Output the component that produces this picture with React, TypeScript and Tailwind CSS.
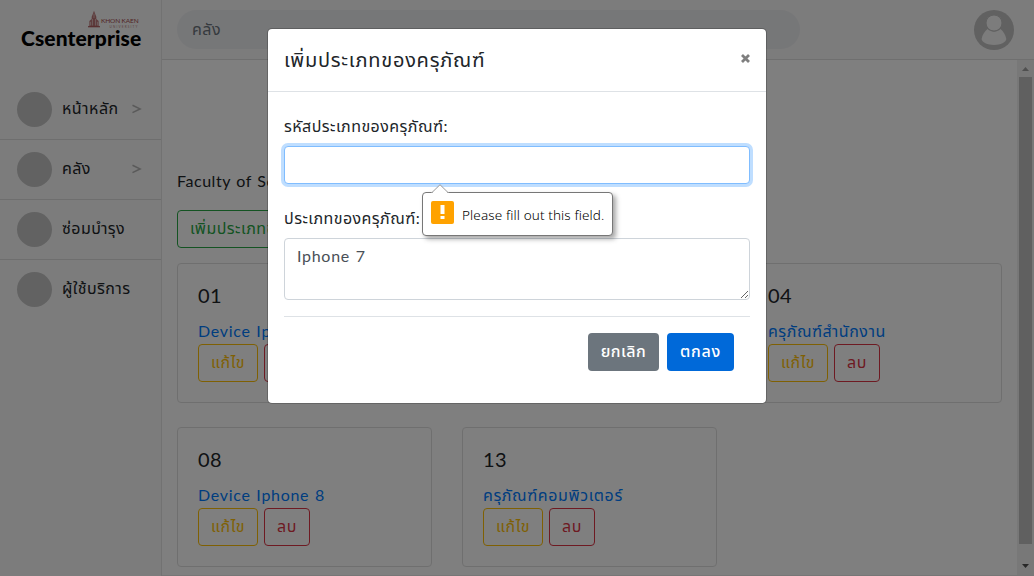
import React from "react";

const menu = [
  { label: "หน้าหลัก", arrow: true },
  { label: "คลัง", arrow: true },
  { label: "ซ่อมบำรุง", arrow: false },
  { label: "ผู้ใช้บริการ", arrow: false },
];

const cards = [
  { code: "01", name: "Device Iphone 7", track: "tracking-[0.7px] [word-spacing:1px]" },
  { code: "02", name: "Device Iphone 6", track: "tracking-[0.7px] [word-spacing:1px]" },
  { code: "04", name: "ครุภัณฑ์สำนักงาน", track: "tracking-[0.550px]" },
  { code: "08", name: "Device Iphone 8", track: "tracking-[0.7px] [word-spacing:1px]" },
  { code: "13", name: "ครุภัณฑ์คอมพิวเตอร์", track: "tracking-[0.6px]" },
];

function Logo() {
  return (
    <div className="flex h-[60px] flex-col pl-[21px] pt-[10px]">
      <div className="flex h-[19px] items-start pl-[67px] text-[#a5484b]">
        <svg width="12" height="19" viewBox="0 0 13 19" fill="currentColor">
          <path d="M6.500 0 8 4 9 6.500V9l2.500 2v6h-10v-6L4 9V6.500L5 4Z" opacity=".75" />
          <path d="M0 16.500h13v1.500H0z" opacity=".8" />
          <path d="M6.500 3v5M4.800 9v7M8.200 9v7M2.800 12v4M10.200 12v4" stroke="#f8f8f8" strokeWidth=".6" />
        </svg>
        <div className="flex flex-col items-end pl-px pt-[6px]">
          <span className="h-[9px] whitespace-nowrap text-[6.500px] leading-[9px] tracking-[-0.1px]">KHON KAEN</span>
          <span className="h-[4px] whitespace-nowrap text-[3px] leading-[4px] tracking-[1.200px] opacity-70">UNIVERSITY</span>
        </div>
      </div>
      <div className="whitespace-nowrap text-[21px] font-black leading-[18px] tracking-[0.1px] text-black">Csenterprise</div>
    </div>
  );
}

function Sidebar() {
  return (
    <aside className="flex h-full w-[162px] shrink-0 flex-col border-r border-[#e4e4e4] bg-[#f8f8f8]">
      <Logo />
      <nav className="flex flex-col pt-[20px]">
        {menu.map((m, i) => (
          <div key={m.label} className="flex h-[60px] items-center border-b border-[#dcdcdc] pl-[17px] pr-[19px] last:border-transparent">
            <span className="h-[35px] w-[35px] rounded-full bg-[#c4c4c4]" />
            <span className="mb-[3px] ml-[10px] flex-1 whitespace-nowrap text-[16px] leading-6 tracking-[0.45px]">{m.label}</span>
            {m.arrow && (
              <svg className="mb-[2px]" width="10" height="10" viewBox="0 0 10 10" fill="none" stroke="#b4b4b4" strokeWidth="1.600">
                <path d="M.5 1.200 8 4.900.5 8.600" />
              </svg>
            )}
          </div>
        ))}
      </nav>
    </aside>
  );
}

function Topbar() {
  return (
    <header className="flex h-[60px] shrink-0 items-center justify-between border-b border-[#dfdfdf] bg-[#f8f8f8] pl-[15px] pr-5">
      <div className="flex h-[39px] w-[623px] items-center rounded-full bg-[#edeef1] px-[15px] pb-[2px] text-[16px] tracking-[0.5px] text-[#6c757d]">คลัง</div>
      <svg width="40" height="40" viewBox="0 0 40 40">
        <circle cx="20" cy="20" r="20" fill="#c2c2c2" />
        <path d="M13.500 19C10.500 21.500 8.300 25 7.600 29c0 3 6 6 12.400 6s12.300-3 12.300-6C31.600 25 29.500 21.500 26.500 19 22.500 22.500 17.500 22.500 13.500 19Z" fill="#f8f8f8" />
        <circle cx="20" cy="13" r="8" fill="#f8f8f8" stroke="#c2c2c2" />
      </svg>
    </header>
  );
}

function Card({ code, name, track }: { code: string; name: string; track: string }) {
  return (
    <div className="flex h-[140px] flex-col rounded border border-[#dfdfdf] bg-white px-5 pt-[19px]">
      <div className="mb-3 text-[20px] leading-6 tracking-[0.5px]">{code}</div>
      <div className={`h-[25px] whitespace-nowrap text-[16px] leading-6 text-[#007bff] ${track}`}>{name}</div>
      <div className="flex gap-[6px]">
        <button className="h-[38px] w-[60px] shrink-0 rounded border border-[#ffc107] pb-[2px] text-[16px] tracking-[0.5px] text-[#ffc107]">แก้ไข</button>
        <button className="h-[38px] w-[46px] shrink-0 rounded border border-[#dc3545] pb-[2px] text-[16px] tracking-[0.5px] text-[#dc3545]">ลบ</button>
      </div>
    </div>
  );
}

function Scrollbar() {
  return (
    <div className="flex w-[17px] shrink-0 flex-col items-center justify-between bg-[#f1f1f1]">
      <svg width="17" height="17" viewBox="0 0 17 17">
        <path d="M5 11h7L8.500 7Z" fill="#a0a0a0" />
      </svg>
      <div className="h-[467px] w-[13px] bg-[#c1c1c1]" />
      <svg width="17" height="31" viewBox="0 0 17 31">
        <path d="M5 20h7l-3.500 4Z" fill="#505050" />
      </svg>
    </div>
  );
}

function Tooltip() {
  return (
    <div className="absolute left-[154px] top-[155px] w-[191px]">
      <div className="mt-[8px] flex h-[44px] items-center rounded border border-[#777] bg-white pl-[8px] shadow-[3px_3px_5px_rgba(0,0,0,0.35)]">
        <span className="mb-[3px] flex h-[23px] w-[23px] items-center justify-center rounded-[2px] bg-[#ffa200]">
          <svg width="5" height="15" viewBox="0 0 5 15" fill="#fff">
            <path d="M.5 0h4v9h-4zM.5 11h4v3h-4z" />
          </svg>
        </span>
        <span className="ml-[8px] whitespace-nowrap pt-[2px] font-['Noto_Sans'] text-[13.500px] font-light tracking-[0.120px] text-black">Please fill out this field.</span>
      </div>
      <svg className="absolute left-[9px] top-0" width="18" height="10" viewBox="0 0 18 10">
        <path d="M1 9 9 .7 17 9v1H1Z" fill="#fff" />
        <path d="M0 8.500h1L9 .7l8 7.800h1" fill="none" stroke="#999" />
      </svg>
    </div>
  );
}

function Modal() {
  return (
    <div className="absolute inset-0 flex items-start justify-center bg-black/50 pt-[28px]">
      <div className="relative flex h-[376px] w-[500px] flex-col rounded-[5px] border border-black/20 bg-white bg-clip-padding">
        <div className="flex h-[63px] shrink-0 items-center justify-between border-b border-[#dee2e6] px-4">
          <h5 className="mb-[2px] whitespace-nowrap text-[20px] leading-[30px] tracking-[0.750px]">เพิ่มประเภทของครุภัณฑ์</h5>
          <svg className="mb-[4px]" width="9" height="9" viewBox="0 0 9 9" stroke="#7f7f7f" strokeWidth="2.800">
            <path d="m1 1 7 7M8 1 1 8" />
          </svg>
        </div>
        <div className="flex flex-col px-4 pt-[22px]">
          <label className="mb-2 self-start whitespace-nowrap text-[16px] leading-6 tracking-[0.450px]">รหัสประเภทของครุภัณฑ์:</label>
          <input className="h-[38px] rounded border border-[#80bdff] bg-white shadow-[0_0_0_3px_#bfdeff] outline-none" />
          <label className="mb-2 mt-[22px] self-start whitespace-nowrap text-[16px] leading-6 tracking-[0.450px]">ประเภทของครุภัณฑ์:</label>
          <textarea
            readOnly
            className="h-[62px] rounded border border-[#ced4da] px-3 pb-[6px] pt-[5px] text-[16px] leading-6 tracking-[0.7px] text-[#495057] outline-none [word-spacing:1px]"
            defaultValue="Iphone 7"
          />
          <div className="mt-4 flex justify-end gap-2 border-t border-[#dee2e6] px-4 pt-4">
            <button className="h-[38px] w-[71px] rounded bg-[#6c757d] pb-[2px] text-[16px] font-medium tracking-[0.5px] text-white">ยกเลิก</button>
            <button className="h-[38px] w-[67px] rounded bg-[#0069d9] pb-[2px] text-[16px] font-medium tracking-[0.7px] text-white">ตกลง</button>
          </div>
        </div>
        <Tooltip />
      </div>
    </div>
  );
}

export default function App() {
  return (
    <div className="relative flex h-[576px] w-[1034px] overflow-hidden bg-white font-['Lato','Noto_Sans_Thai',sans-serif] text-[#212529]">
      <Sidebar />
      <div className="flex min-w-0 flex-1 flex-col">
        <Topbar />
        <div className="flex min-h-0 flex-1 border-b border-[#ececec]">
          <main className="flex min-w-0 flex-1 flex-col overflow-hidden pl-[15px] pr-[15px] pt-[109px]">
            <div className="h-6 whitespace-nowrap text-[16px] leading-6 tracking-[0.550px] [word-spacing:1px]">Faculty of Science</div>
            <button className="mt-[17px] h-[38px] w-[190px] shrink-0 whitespace-nowrap rounded border border-[#28a745] px-3 pb-[2px] text-left text-[16px] tracking-[0.450px] text-[#28a745]">
              เพิ่มประเภทของครุภัณฑ์
            </button>
            <div className="mt-[15px] grid grid-cols-[255px_255px_255px] gap-x-[30px] gap-y-6">
              {cards.map((c) => (
                <Card key={c.code} {...c} />
              ))}
            </div>
          </main>
          <Scrollbar />
        </div>
      </div>
      <Modal />
    </div>
  );
}
